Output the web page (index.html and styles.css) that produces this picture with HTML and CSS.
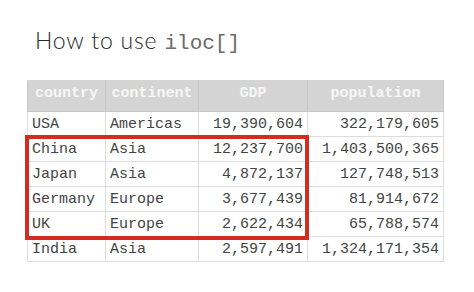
FILE: index.html
```html
<!DOCTYPE html>
<html>
<head>
<meta charset="utf-8">
<link rel="stylesheet" href="styles.css">
</head>
<body>
<div class="page">
  <h1 class="title">How to use <code class="code">iloc[]</code></h1>
  <div class="table-wrap">
    <table class="data">
      <colgroup>
        <col class="c1"><col class="c2"><col class="c3"><col class="c4">
      </colgroup>
      <thead>
        <tr><th>country</th><th>continent</th><th>GDP</th><th>population</th></tr>
      </thead>
      <tbody>
        <tr><td>USA</td><td>Americas</td><td class="num">19,390,604</td><td class="num">322,179,605</td></tr>
        <tr><td>China</td><td>Asia</td><td class="num">12,237,700</td><td class="num">1,403,500,365</td></tr>
        <tr><td>Japan</td><td>Asia</td><td class="num">4,872,137</td><td class="num">127,748,513</td></tr>
        <tr><td>Germany</td><td>Europe</td><td class="num">3,677,439</td><td class="num">81,914,672</td></tr>
        <tr><td>UK</td><td>Europe</td><td class="num">2,622,434</td><td class="num">65,788,574</td></tr>
        <tr><td>India</td><td>Asia</td><td class="num">2,597,491</td><td class="num">1,324,171,354</td></tr>
      </tbody>
    </table>
    <div class="highlight"></div>
  </div>
</div>
</body>
</html>
```
FILE: styles.css
```css
html, body {
  margin: 0;
  padding: 0;
  background: #ffffff;
}
.page {
  padding: 26px 0 0 27px;
}
.title {
  margin: 0 0 0 8px;
  font-family: Lato, "Open Sans", sans-serif;
  font-weight: 300;
  font-size: 23px;
  line-height: 28px;
  color: #2a2a2a;
  letter-spacing: 0.8px;
}
.code {
  font-family: "Liberation Mono", monospace;
  font-size: 21px;
  font-weight: normal;
  color: #6a6a6a;
  letter-spacing: 0;
}
.table-wrap {
  position: relative;
  margin-top: 22px;
  width: 416px;
}
.data {
  border-collapse: collapse;
  width: 416px;
  table-layout: fixed;
  font-family: "Liberation Mono", "Courier New", monospace;
  font-size: 15px;
  color: #444;
}
.c1 { width: 78px; }
.c2 { width: 93px; }
.c3 { width: 109px; }
.c4 { width: 136px; }
.data th {
  background: #d4d4d4;
  color: #f6f6f6;
  font-weight: bold;
  height: 31px;
  padding: 0 0 6px;
  text-align: center;
  border: 1px solid #c8c8c8;
  border-top-color: #d4d4d4;
  vertical-align: middle;
  box-sizing: border-box;
}
.data td {
  height: 25px;
  padding: 0 4px;
  border: 1px solid #dcdcdc;
  white-space: nowrap;
  box-sizing: border-box;
}
.data td.num {
  text-align: right;
}
.highlight {
  position: absolute;
  left: -2px;
  top: 55px;
  width: 284px;
  height: 105px;
  border: 4px solid #d42a22;
  box-sizing: border-box;
}
```
